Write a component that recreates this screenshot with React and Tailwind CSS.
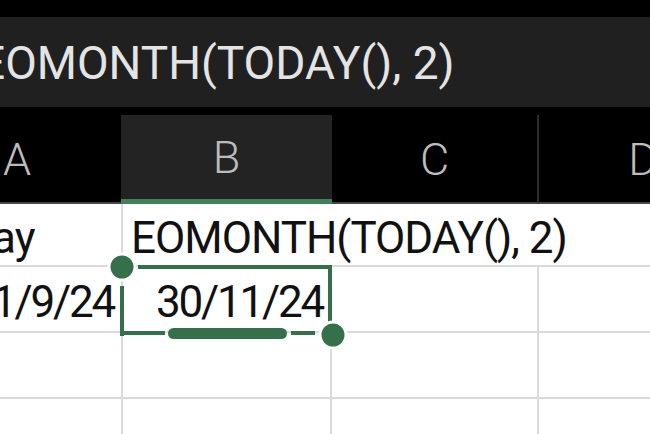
import React from 'react';

const columns = [
    { key: 'A', width: 'w-[208px]' },
    { key: 'B', width: 'w-[211px]' },
    { key: 'C', width: 'w-[207px]' },
    { key: 'D', width: 'w-[208px]' },
];

function HeaderRow() {
    return (
        <div className="flex h-[97px] bg-black pt-[8px] ml-[-87px]">
            {columns.map(col => {
                const active = col.key === 'B';
                return (
                    <div
                        key={col.key}
                        className={
                            col.width + ' shrink-0 flex items-center justify-center text-[45px] font-light text-[#bcbcbc] ' +
                            (active ? 'bg-[#232323] border-b-[5px] border-[#41805a]' : 'border-b-2 border-[#474747]') +
                            (col.key === 'C' ? ' border-r-2 border-r-[#2c2c2c]' : '')
                        }
                    >
                        <span className="pt-[2px]">{col.key}</span>
                    </div>
                );
            })}
        </div>
    );
}

function Cell({ width, children, align = 'left', line = true, last = false }) {
    return (
        <div
            className={
                width + ' shrink-0 h-full flex items-center pt-[6px] whitespace-nowrap overflow-visible ' +
                (line && !last ? 'border-r-2 border-[#dadada] ' : '') +
                (align === 'right' ? 'justify-end pr-[7px] tracking-[-2.2px]' : 'justify-start pl-[8px]')
            }
        >
            {children}
        </div>
    );
}

function GridRow({ height, children }) {
    return (
        <div className={height + ' flex ml-[-87px] border-b-2 border-[#dadada] text-[44px] text-[#111] tracking-[-1px]'}>
            {children}
        </div>
    );
}

function Selection() {
    const green = '#35704b';
    return (
        <svg className="absolute top-0 left-0 pointer-events-none" width="650" height="434" viewBox="0 0 650 434">
            {/* top and right edges */}
            <rect x="138" y="265" width="194" height="4" fill={green} />
            <rect x="328" y="265" width="4" height="58" fill={green} />
            {/* left edge */}
            <rect x="120" y="286" width="4" height="50" fill={green} />
            {/* bottom edge, broken by the drag handle */}
            <rect x="120" y="331" width="45" height="4" fill={green} />
            <rect x="168" y="328" width="119" height="11" rx="5.5" fill={green} />
            <rect x="291" y="331" width="24" height="4" fill={green} />
            {/* corner handles */}
            <circle cx="122" cy="267" r="13" fill={green} stroke="#ffffff" strokeWidth="3" />
            <circle cx="333" cy="335" r="13" fill={green} stroke="#ffffff" strokeWidth="3" />
        </svg>
    );
}

export default function App() {
    return (
        <div className="relative w-[650px] h-[434px] overflow-hidden bg-white font-['Roboto',sans-serif]">
            <div className="h-[17px] bg-black" />
            <div className="h-[90px] bg-[#202020] flex items-center overflow-hidden">
                <span className="ml-[-21px] text-[46px] text-[#e4e4e4] whitespace-nowrap pt-[2px]">
                    EOMONTH(TODAY(), 2)
                </span>
            </div>

            <HeaderRow />

            <GridRow height="h-[63px]">
                <Cell width="w-[210px]">Today</Cell>
                <Cell width="w-[209px]" line={false}>EOMONTH(TODAY(), 2)</Cell>
                <Cell width="w-[207px]" line={false} />
                <Cell width="w-[208px]" last />
            </GridRow>
            <GridRow height="h-[66px]">
                <Cell width="w-[210px]" align="right">31/9/24</Cell>
                <Cell width="w-[209px]" align="right">30/11/24</Cell>
                <Cell width="w-[207px]" />
                <Cell width="w-[208px]" last />
            </GridRow>
            <GridRow height="h-[66px]">
                <Cell width="w-[210px]" />
                <Cell width="w-[209px]" />
                <Cell width="w-[207px]" />
                <Cell width="w-[208px]" last />
            </GridRow>
            <GridRow height="h-[66px]">
                <Cell width="w-[210px]" />
                <Cell width="w-[209px]" />
                <Cell width="w-[207px]" />
                <Cell width="w-[208px]" last />
            </GridRow>

            <Selection />
        </div>
    );
}
